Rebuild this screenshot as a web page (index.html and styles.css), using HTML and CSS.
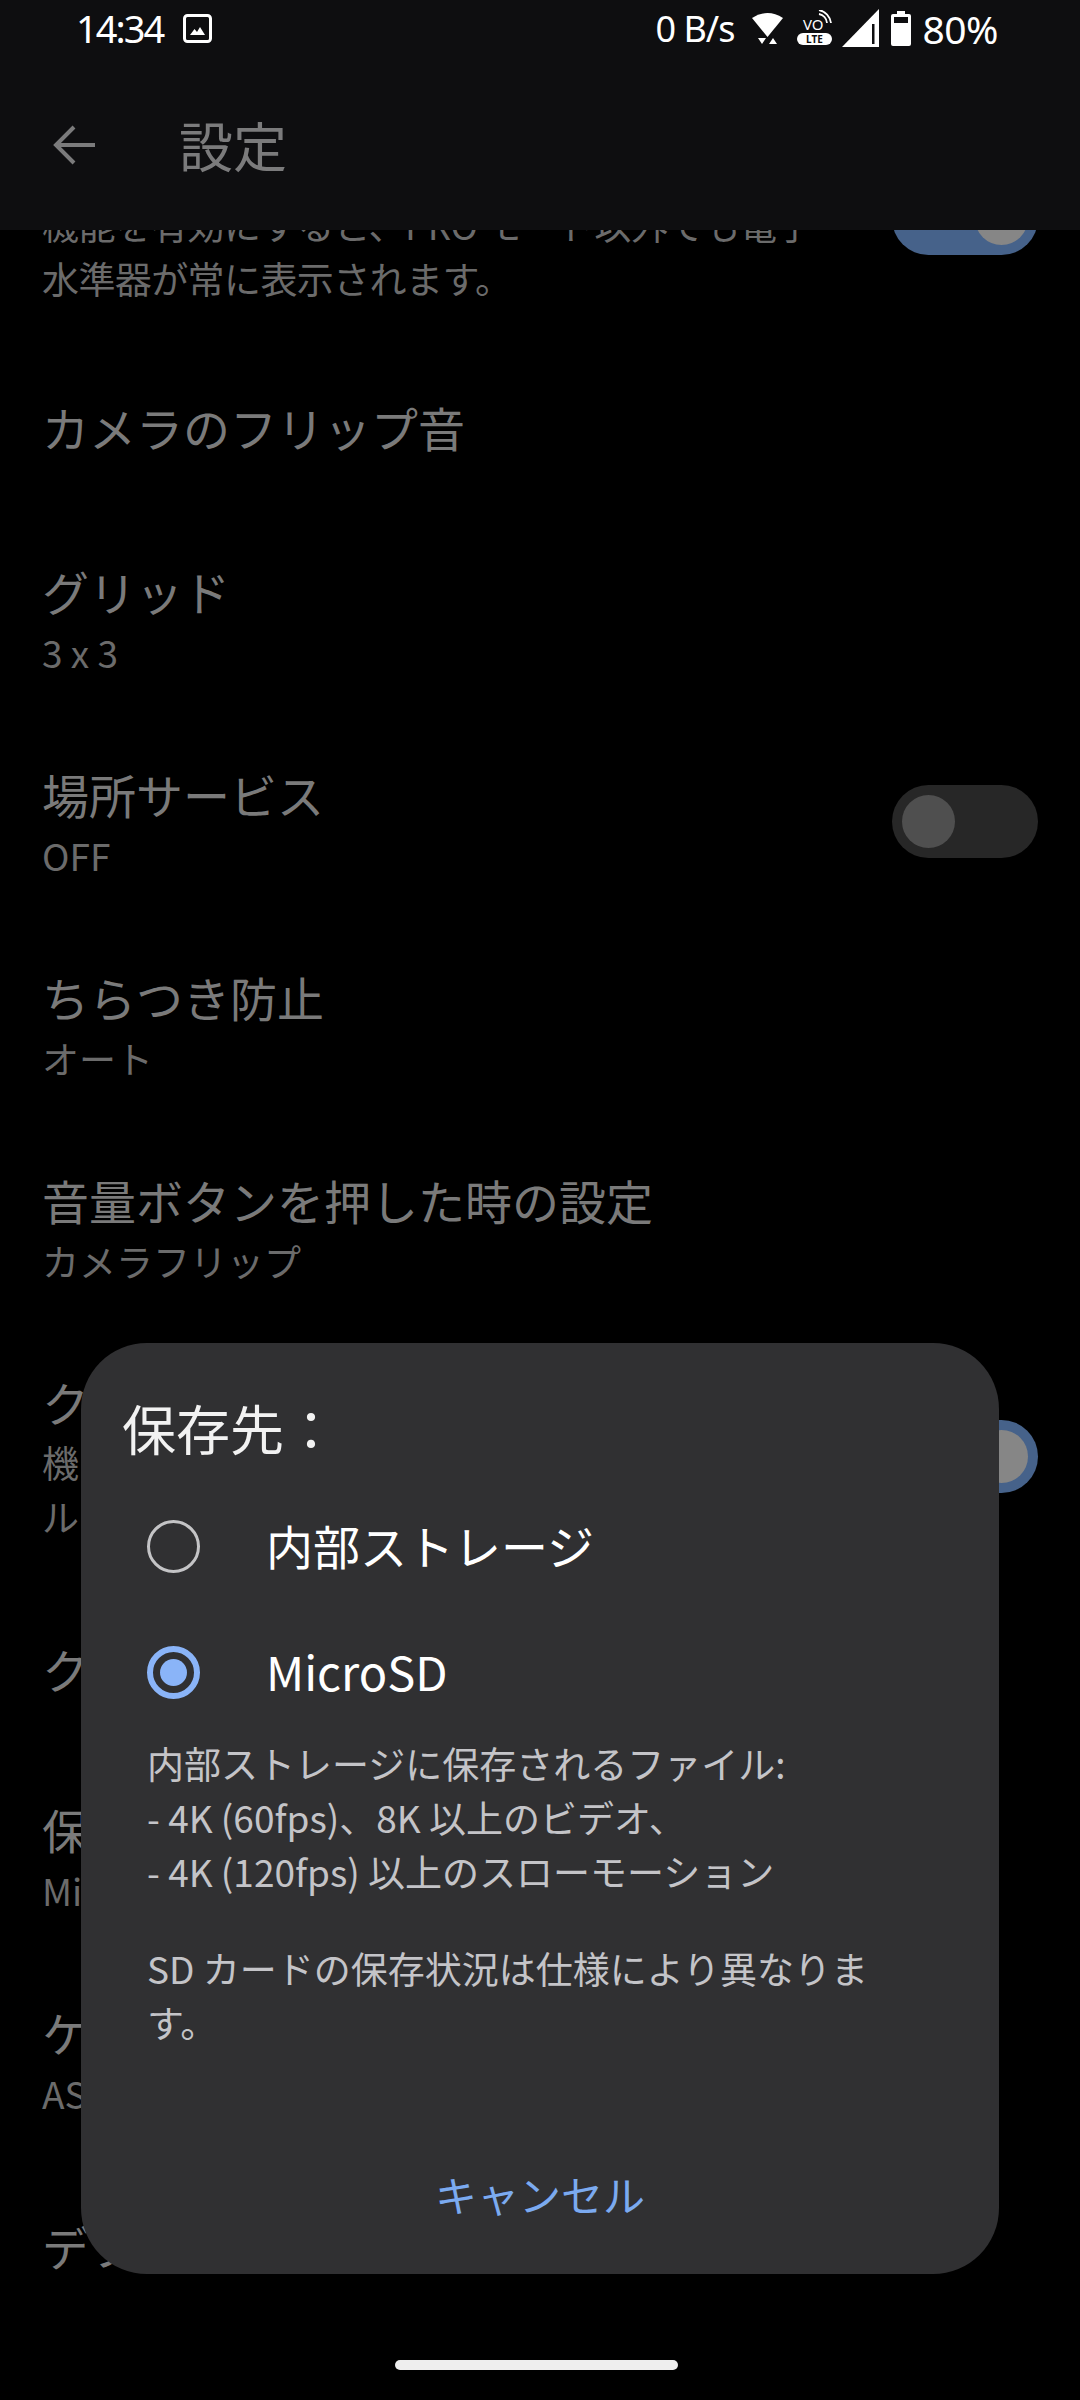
FILE: index.html
```html
<!DOCTYPE html>
<html lang="ja">
<head>
    <meta charset="UTF-8">
    <meta name="viewport" content="width=device-width, initial-scale=1.0">
    <title>設定</title>
    <link rel="stylesheet" href="styles.css">
</head>
<body>
    <header class="top">
        <div class="status-bar">
            <div class="status-left">
                <span class="clock">14:34</span>
                <svg class="ic-image" width="29" height="29" viewBox="0 0 29 29">
                    <rect x="1.5" y="1.5" width="26" height="26" rx="3" fill="none" stroke="#fff" stroke-width="3"/>
                    <path d="M7 21l4.5-6 2.5 3 3-5 5 8z" fill="#fff"/>
                </svg>
            </div>
            <div class="status-right">
                <span class="speed">0 B/s</span>
                <svg class="ic-wifi" width="31" height="34" viewBox="0 0 31 34">
                    <path d="M0 7Q15.500-3 31 7L15.500 26z" fill="#fff"/>
                    <path d="M6 27h8l-4 6zM21 27l4 6h-8z" fill="#fff"/>
                </svg>
                <svg class="ic-volte" width="35" height="36" viewBox="0 0 35 36">
                    <rect x="0" y="23" width="35" height="12" rx="6" fill="#fff"/>
                    <path d="M22 4a10 10 0 0 1 8 9M22 0a15 15 0 0 1 12 13" fill="none" stroke="#fff" stroke-width="1.800"/>
                    <text x="6" y="20" class="volte-vo">VO</text>
                    <text x="17.500" y="33" class="volte-lte" text-anchor="middle">LTE</text>
                </svg>
                <svg class="ic-signal" width="37" height="38" viewBox="0 0 37 38">
                    <path d="M0 38L37 0v38z" fill="#fff"/>
                    <path d="M30 15h2.500v20H30z" fill="#0e0e10"/>
                </svg>
                <svg class="ic-battery" width="20" height="35" viewBox="0 0 20 35">
                    <path d="M6 0h8v3h4a2 2 0 0 1 2 2v28a2 2 0 0 1-2 2H2a2 2 0 0 1-2-2V5a2 2 0 0 1 2-2h4z" fill="#fff"/>
                    <rect x="3" y="6" width="14" height="6" fill="#0e0e10"/>
                </svg>
                <span class="percent">80%</span>
            </div>
        </div>
        <div class="app-bar">
            <svg class="ic-back" width="42" height="40" viewBox="0 0 42 40">
                <path d="M42 20H3M21 2L3 20l18 18" fill="none" stroke="#7b7b7c" stroke-width="4"/>
            </svg>
            <h1 class="app-title">設定</h1>
        </div>
    </header>

    <main class="list">
        <div class="row row-tall">
            <div class="row-text">
                <div class="row-title">水準器</div>
                <div class="row-sub">機能を有効にすると、PRO モード以外でも電子</div>
                <div class="row-sub">水準器が常に表示されます。</div>
            </div>
            <span class="switch on"></span>
        </div>
        <div class="row row-single row-flip">
            <div class="row-text"><div class="row-title">カメラのフリップ音</div></div>
        </div>
        <div class="row">
            <div class="row-text">
                <div class="row-title">グリッド</div>
                <div class="row-sub">3 x 3</div>
            </div>
        </div>
        <div class="row">
            <div class="row-text">
                <div class="row-title">場所サービス</div>
                <div class="row-sub">OFF</div>
            </div>
            <span class="switch"></span>
        </div>
        <div class="row">
            <div class="row-text">
                <div class="row-title">ちらつき防止</div>
                <div class="row-sub">オート</div>
            </div>
        </div>
        <div class="row">
            <div class="row-text">
                <div class="row-title">音量ボタンを押した時の設定</div>
                <div class="row-sub">カメラフリップ</div>
            </div>
        </div>
        <div class="row row-tall">
            <div class="row-text">
                <div class="row-title">ク</div>
                <div class="row-sub">機</div>
                <div class="row-sub">ル</div>
            </div>
            <span class="switch on"></span>
        </div>
        <div class="row row-single">
            <div class="row-text"><div class="row-title">ク</div></div>
        </div>
        <div class="row">
            <div class="row-text">
                <div class="row-title">保存先</div>
                <div class="row-sub">MicroSD</div>
            </div>
        </div>
        <div class="row">
            <div class="row-text">
                <div class="row-title">ケ</div>
                <div class="row-sub">ASUS</div>
            </div>
        </div>
        <div class="row row-single">
            <div class="row-text"><div class="row-title">デフォルト</div></div>
        </div>
    </main>

    <section class="dialog">
        <h2 class="dialog-title">保存先：</h2>
        <div class="option">
            <span class="radio"></span>
            <span class="option-label">内部ストレージ</span>
        </div>
        <div class="option">
            <span class="radio checked"></span>
            <span class="option-label">MicroSD</span>
        </div>
        <div class="dialog-body">
            <p>内部ストレージに保存されるファイル:<br>- 4K (60fps)、8K 以上のビデオ、<br>- 4K (120fps) 以上のスローモーション</p>
            <p>SD カードの保存状況は仕様により異なります。</p>
        </div>
        <div class="dialog-actions">
            <span class="cancel">キャンセル</span>
        </div>
    </section>

    <div class="home-bar"></div>
</body>
</html>
```

FILE: styles.css
```css
* {
    box-sizing: border-box;
}
html, body {
    margin: 0;
    padding: 0;
}
body {
    width: 1080px;
    height: 2400px;
    background: #000;
    font-family: "Noto Sans CJK JP", "Noto Sans", sans-serif;
    position: relative;
    overflow: hidden;
}
.top {
    height: 230px;
    background: #0e0e10;
    position: relative;
    z-index: 1;
}
.status-bar {
    height: 56px;
    padding: 0 82px 0 76px;
    display: flex;
    justify-content: space-between;
    align-items: center;
    color: #fff;
}
.status-left, .status-right {
    display: flex;
    align-items: center;
}
.clock {
    font-size: 38px;
    font-family: "Noto Sans", sans-serif;
    letter-spacing: -2px;
}
.ic-image {
    margin-left: 20px;
}
.speed, .percent {
    font-family: "Noto Sans", sans-serif;
}
.speed {
    font-size: 36px;
    letter-spacing: -1px;
}
.percent {
    font-size: 39px;
    margin-left: 11px;
    letter-spacing: -0.5px;
}
.ic-wifi {
    margin-left: 18px;
}
.ic-volte {
    margin-left: 14px;
}
.ic-signal {
    margin-left: 10px;
}
.ic-battery {
    margin-left: 12px;
}
.volte-vo {
    font: 15px "Noto Sans", sans-serif;
    fill: #fff;
}
.volte-lte {
    font: bold 10px "Noto Sans", sans-serif;
    fill: #0e0e10;
}
.app-bar {
    height: 174px;
    padding: 3px 0 0 53px;
    display: flex;
    align-items: center;
}
.app-title {
    margin: 0 0 0 84px;
    font-size: 54px;
    font-weight: 400;
    color: #7b7b7c;
}
.list {
    margin-top: -140px;
}
.row {
    height: 203px;
    padding: 0 42px 0 42px;
    display: flex;
    justify-content: space-between;
    align-items: center;
}
.row-tall {
    height: 255px;
}
.row-single {
    height: 171px;
}
.row-flip {
    padding-bottom: 8px;
}
.row-title {
    font-size: 47px;
    line-height: 69px;
    color: #7a7a7a;
    white-space: nowrap;
}
.row-sub {
    font-size: 37px;
    line-height: 55px;
    color: #6b6b6b;
    white-space: nowrap;
}
.row-tall .row-title {
    line-height: 66px;
}
.row-tall .row-sub {
    line-height: 54px;
    letter-spacing: -0.6px;
}
.switch {
    width: 146px;
    height: 73px;
    margin-top: 2px;
    padding: 10px;
    border-radius: 37px;
    background: #272727;
    display: flex;
}
.switch::after {
    content: "";
    width: 53px;
    height: 53px;
    border-radius: 50%;
    background: #4f4f4f;
}
.switch.on {
    background: #46628a;
    justify-content: flex-end;
}
.switch.on::after {
    background: #868686;
}
.dialog {
    position: absolute;
    left: 81px;
    top: 1343px;
    width: 918px;
    height: 931px;
    padding: 52px 43px 0 43px;
    background: #303032;
    border-radius: 66px;
    z-index: 2;
    display: flex;
    flex-direction: column;
}
.dialog-title {
    margin: 0 0 0 -2px;
    font-size: 54px;
    line-height: 66px;
    font-weight: 400;
    color: #f2f2f2;
}
.option {
    height: 126px;
    padding-left: 23px;
    display: flex;
    align-items: center;
}
.dialog-title + .option {
    margin-top: 22px;
}
.radio {
    width: 53px;
    height: 53px;
    border-radius: 50%;
    border: 3px solid #c4c4c6;
    display: flex;
    align-items: center;
    justify-content: center;
    flex-shrink: 0;
}
.radio.checked {
    border: 6px solid #8ab4f8;
}
.radio.checked::after {
    content: "";
    width: 27px;
    height: 27px;
    border-radius: 50%;
    background: #8ab4f8;
}
.option-label {
    margin: 0 0 4px 66px;
    font-size: 47px;
    color: #fff;
}
.dialog-body {
    padding: 0 66px 0 23px;
    margin-top: 1px;
    font-size: 37px;
    line-height: 54px;
    color: #c4c4c8;
}
.dialog-body p {
    margin: 0 0 43px;
}
.dialog-actions {
    margin-top: auto;
    height: 162px;
    display: flex;
    justify-content: center;
    align-items: center;
}
.cancel {
    font-size: 42px;
    color: #7baaf0;
}
.home-bar {
    position: absolute;
    left: 395px;
    top: 2360px;
    width: 283px;
    height: 10px;
    border-radius: 5px;
    background: #eee;
}
```
